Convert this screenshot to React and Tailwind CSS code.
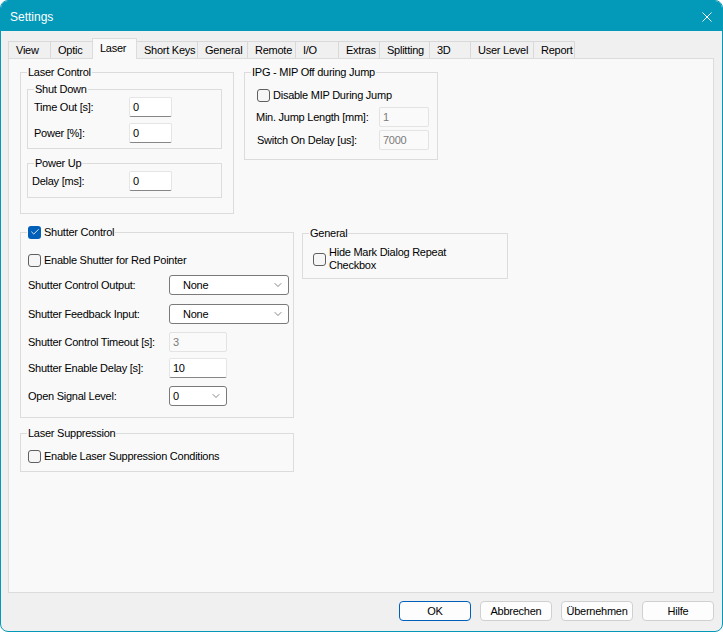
import { Check, ChevronDown } from 'lucide-react';

const tabs = [
  { label: 'View', w: 'w-[43px]' },
  { label: 'Optic', w: 'w-[43px]' },
  { label: 'Laser', w: 'w-[45px]', active: true },
  { label: 'Short Keys', w: 'w-[62px]' },
  { label: 'General', w: 'w-[51px]' },
  { label: 'Remote', w: 'w-[49px]' },
  { label: 'I/O', w: 'w-[44px]' },
  { label: 'Extras', w: 'w-[42px]' },
  { label: 'Splitting', w: 'w-[51px]' },
  { label: '3D', w: 'w-[42px]' },
  { label: 'User Level', w: 'w-[64px]' },
  { label: 'Report', w: 'w-[42px]' },
];

function Group({ legend, className, children }) {
  return (
    <div className={`relative border border-[#dcdcdc] ${className}`}>
      <div className="absolute -top-[8px] left-[6px] px-[1px] bg-[#f9f9f9] leading-[14px] flex items-center whitespace-nowrap">
        {legend}
      </div>
      {children}
    </div>
  );
}

function CheckBox({ checked }) {
  if (checked) {
    return (
      <span className="w-[13px] h-[13px] rounded-[3px] bg-[#005fb8] flex items-center justify-center shrink-0">
        <Check size={10} strokeWidth={2} color="white" />
      </span>
    );
  }
  return <span className="w-[13px] h-[13px] rounded-[3px] border border-[#5f5f5f] bg-[#f6f6f6] shrink-0" />;
}

function TextBox({ value, width, disabled }) {
  return (
    <div
      className={`${width} h-[20px] rounded-[2px] border flex items-center pl-[3px] ${
        disabled
          ? 'bg-[#fafafa] border-[#e3e3e3] text-[#7a7a7a]'
          : 'bg-white border-[#e5e5e5] border-b-[#868686]'
      }`}
    >
      {value}
    </div>
  );
}

function Combo({ value, width, pad }) {
  return (
    <div className={`${width} h-[20px] rounded-[3px] border border-[#7a7a7a] bg-white flex items-center justify-between ${pad} pr-[4px]`}>
      <span>{value}</span>
      <ChevronDown size={12} strokeWidth={1.2} color="#333" />
    </div>
  );
}

function Label({ width, children }) {
  return <span className={`${width} whitespace-nowrap`}>{children}</span>;
}

export default function App() {
  return (
    <div
      className="w-[723px] h-[632px] flex flex-col bg-[#f0f0f0] border border-[#0399b9] rounded-[8px] overflow-hidden text-[11px] tracking-[-0.25px] text-black"
      style={{ fontFamily: '"Liberation Sans", Arial, sans-serif' }}
    >
      {/* Title bar */}
      <div className="h-[30px] bg-[#0399b9] flex items-center justify-between pl-[9px] pr-[10px] pt-[1px] text-white text-[12px] tracking-normal shrink-0">
        <span>Settings</span>
        <svg width="10" height="10" viewBox="0 0 10 10">
          <path d="M0.5 0.5 L9.5 9.5 M9.5 0.5 L0.5 9.5" stroke="white" strokeWidth="1" />
        </svg>
      </div>

      <div className="flex-1 flex flex-col pl-[7px] pr-[8px] pt-[7px]">
        {/* Tabs */}
        <div className="h-[20px] flex items-end">
          {tabs.map((t) =>
            t.active ? (
              <div
                key={t.label}
                className={`${t.w} h-[21px] -mb-px -ml-px relative z-10 bg-[#f9f9f9] border border-b-0 border-[#dcdcdc] pl-[7px] pb-[2px] flex items-center whitespace-nowrap`}
              >
                {t.label}
              </div>
            ) : (
              <div
                key={t.label}
                className={`${t.w} h-[17px] bg-[#f0f0f0] border border-b-0 border-[#d9d9d9] -ml-px first:ml-0 pl-[7px] pt-px flex items-center whitespace-nowrap`}
              >
                {t.label}
              </div>
            )
          )}
        </div>

        {/* Panel */}
        <div className="h-[535px] bg-[#f9f9f9] border border-[#dcdcdc] pl-[11px] pt-[13px]">
          <div className="flex items-start">
            <Group legend="Laser Control" className="w-[214px] h-[142px] pl-[6px] pt-[16px]">
              <Group legend="Shut Down" className="w-[195px] h-[60px] pl-[6px] pt-[7px] flex flex-col gap-[6px]">
                <div className="flex items-center h-[20px]">
                  <Label width="w-[95px]">Time Out [s]:</Label>
                  <TextBox value="0" width="w-[43px]" />
                </div>
                <div className="flex items-center h-[20px]">
                  <Label width="w-[95px]">Power [%]:</Label>
                  <TextBox value="0" width="w-[43px]" />
                </div>
              </Group>
              <Group legend="Power Up" className="w-[195px] h-[35px] mt-[14px] pl-[4px] pt-[7px]">
                <div className="flex items-center h-[20px]">
                  <Label width="w-[97px]">Delay [ms]:</Label>
                  <TextBox value="0" width="w-[43px]" />
                </div>
              </Group>
            </Group>

            <Group legend="IPG - MIP Off during Jump" className="w-[194px] h-[88px] ml-[10px] pl-[11px] pt-[14px]">
              <div className="h-[16px] flex items-center gap-[3px] pl-[1px]">
                <CheckBox />
                <span>Disable MIP During Jump</span>
              </div>
              <div className="flex items-center h-[20px] mt-[4px]">
                <Label width="w-[123px]">Min. Jump Length [mm]:</Label>
                <TextBox value="1" width="w-[50px]" disabled />
              </div>
              <div className="flex items-center h-[20px] mt-[3px]">
                <Label width="w-[123px] pl-[1px]">Switch On Delay [us]:</Label>
                <TextBox value="7000" width="w-[50px]" disabled />
              </div>
            </Group>
          </div>

          <div className="flex items-start mt-[18px]">
            <Group
              legend={
                <span className="flex items-center gap-[3px]">
                  <CheckBox checked />
                  <span>Shutter Control</span>
                </span>
              }
              className="w-[274px] h-[186px] pl-[7px] pt-[19px]"
            >
              <div className="h-[16px] flex items-center gap-[3px]">
                <CheckBox />
                <span>Enable Shutter for Red Pointer</span>
              </div>
              <div className="flex items-center h-[20px] mt-[7px]">
                <Label width="w-[141px]">Shutter Control Output:</Label>
                <Combo value="None" width="w-[120px]" pad="pl-[13px]" />
              </div>
              <div className="flex items-center h-[20px] mt-[9px]">
                <Label width="w-[141px]">Shutter Feedback Input:</Label>
                <Combo value="None" width="w-[120px]" pad="pl-[13px]" />
              </div>
              <div className="flex items-center h-[20px] mt-[8px]">
                <Label width="w-[141px]">Shutter Control Timeout [s]:</Label>
                <TextBox value="3" width="w-[58px]" disabled />
              </div>
              <div className="flex items-center h-[20px] mt-[6px]">
                <Label width="w-[141px]">Shutter Enable Delay [s]:</Label>
                <TextBox value="10" width="w-[58px]" />
              </div>
              <div className="flex items-center h-[20px] mt-[8px]">
                <Label width="w-[141px]">Open Signal Level:</Label>
                <Combo value="0" width="w-[58px]" pad="pl-[3px]" />
              </div>
            </Group>

            <Group legend="General" className="w-[206px] h-[46px] ml-[8px] mt-[1px] pl-[10px] pt-[12px]">
              <div className="flex items-center gap-[3px]">
                <CheckBox />
                <span className="leading-[13px]">
                  Hide Mark Dialog Repeat
                  <br />
                  Checkbox
                </span>
              </div>
            </Group>
          </div>

          <Group legend="Laser Suppression" className="w-[274px] h-[39px] mt-[15px] pl-[7px] pt-[14px]">
            <div className="h-[16px] flex items-center gap-[3px]">
              <CheckBox />
              <span>Enable Laser Suppression Conditions</span>
            </div>
          </Group>
        </div>

        {/* Buttons */}
        <div className="flex justify-end gap-[9px] mt-[8px]">
          <button className="w-[72px] h-[20px] rounded-[4px] border border-[#005fb8] bg-[#fdfdfd]">OK</button>
          <button className="w-[72px] h-[20px] rounded-[4px] border border-[#d0d0d0] bg-[#fdfdfd]">Abbrechen</button>
          <button className="w-[72px] h-[20px] rounded-[4px] border border-[#d0d0d0] bg-[#fdfdfd]">Übernehmen</button>
          <button className="w-[72px] h-[20px] rounded-[4px] border border-[#d0d0d0] bg-[#fdfdfd]">Hilfe</button>
        </div>
      </div>
    </div>
  );
}
